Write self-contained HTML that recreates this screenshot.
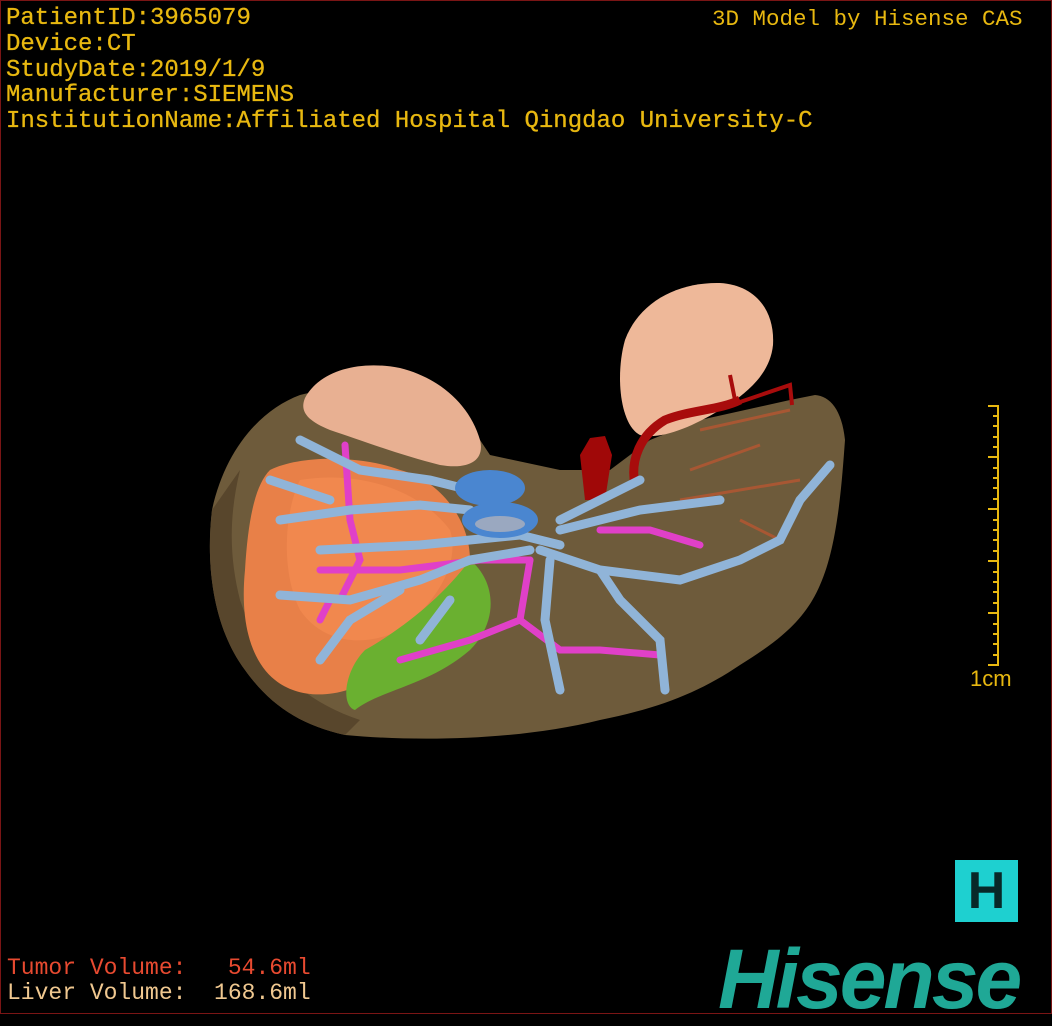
<!DOCTYPE html>
<html><head><meta charset="utf-8"><style>
html,body{margin:0;padding:0;background:#000;}
body{width:1052px;height:1020px;position:relative;overflow:hidden;}
.frame{position:absolute;left:0;top:0;width:1050px;height:1012px;border:1px solid #7a1515;}
.t{position:absolute;font-family:"Liberation Mono",monospace;white-space:pre;line-height:1;}
.y{color:#e8b810;font-size:24px;left:6px;-webkit-text-stroke:0.3px #e8b810;}
</style></head><body>
<div class="frame"></div>
<svg width="1052" height="1020" style="position:absolute;left:0;top:0">
<path d="M300,395 C260,410 225,450 212,510 C205,570 215,630 245,670 C270,705 300,725 345,735 C420,742 520,740 600,720 C660,708 700,692 740,665 C780,640 805,620 820,585 C838,545 842,480 845,440 C842,410 830,396 815,395 L790,400 L700,420 L650,440 L610,470 L560,470 L490,455 L480,440 C440,400 360,380 300,395 Z" fill="#6e5b3b"/>
<path d="M212,510 C205,570 215,630 245,670 C270,705 300,725 345,735 L360,720 C300,700 260,660 240,600 C230,560 228,520 240,470 Z" fill="#58462c"/>
<path d="M270,470 C300,455 360,455 400,470 C440,480 470,520 470,560 C470,610 430,650 380,675 C340,700 300,700 275,680 C250,660 240,620 245,570 C248,520 255,485 270,470 Z" fill="#e88048"/>
<path d="M300,480 C360,470 420,490 450,530 C460,560 440,600 400,630 C360,650 320,640 300,610 C280,570 285,510 300,480 Z" fill="#f28a50" opacity="0.8"/>
<path d="M470,560 C495,580 500,620 470,650 C430,685 380,690 355,710 C340,705 345,670 365,650 C400,630 440,600 470,560 Z" fill="#6ab030"/>
<path d="M305,398 C320,370 360,360 400,368 C440,378 470,405 480,440 C485,460 470,470 440,465 C400,455 360,440 330,430 C305,420 300,410 305,398 Z" fill="#e8b092"/>
<path d="M625,340 C640,300 680,282 720,283 C755,285 775,310 773,345 C770,375 745,395 720,410 C690,428 660,440 640,435 C620,425 615,375 625,340 Z" fill="#eeb899"/>
<path d="M635,485 C630,460 640,435 665,420 C690,410 720,410 740,400" stroke="#a80c0c" stroke-width="9" fill="none"/>
<path d="M735,400 L730,375 M740,402 L790,385 L792,405" stroke="#a80c0c" stroke-width="4" fill="none"/>
<path d="M580,455 L590,438 L605,436 L612,455 L605,500 L585,500 Z" fill="#a00808"/>
<path d="M700,430 L790,410 M690,470 L760,445 M680,500 L800,480 M740,520 L780,540" stroke="#c05530" stroke-width="3" fill="none" opacity="0.7"/>
<g stroke="#e040c8" stroke-width="7" fill="none" stroke-linecap="round">
<path d="M345,445 L350,520 L360,560 L340,600"/>
<path d="M320,570 L400,570 L480,560 L530,560"/>
<path d="M530,560 L520,620 L470,640 L400,660"/>
<path d="M520,620 L560,650 L600,650 L660,655"/>
<path d="M600,530 L650,530 L700,545"/>
<path d="M330,600 L320,620"/>
</g>
<g stroke="#90b4d8" stroke-width="9" fill="none" stroke-linecap="round">
<path d="M300,440 L360,470 L430,480 L470,490"/>
<path d="M280,520 L350,510 L420,505 L470,510"/>
<path d="M270,480 L330,500"/>
<path d="M320,550 L420,545 L520,535 L560,545"/>
<path d="M280,595 L350,600 L420,580 L470,560 L530,550"/>
<path d="M320,660 L350,620 L400,590"/>
<path d="M420,640 L450,600"/>
<path d="M540,550 L600,570 L680,580 L740,560 L780,540 L800,500"/>
<path d="M800,500 L830,465"/>
<path d="M600,570 L620,600 L660,640 L665,690"/>
<path d="M550,560 L545,620 L560,690"/>
<path d="M560,530 L640,510 L720,500"/>
<path d="M560,520 L620,490 L640,480"/>
</g>
<ellipse cx="490" cy="488" rx="35" ry="18" fill="#4a86d0"/>
<ellipse cx="500" cy="520" rx="38" ry="18" fill="#4a86d0"/>
<ellipse cx="500" cy="524" rx="25" ry="8" fill="#9aa8c0"/>
<path d="M998,405 V666" stroke="#e8b810" stroke-width="2"/>
<g stroke="#e8b810" stroke-width="2">
<path d="M988,406 H998 M988,457 H998 M988,509 H998 M988,561 H998 M988,613 H998 M988,665 H998"/>
<path d="M993,416 H998 M993,426 H998 M993,437 H998 M993,447 H998 M993,468 H998 M993,478 H998 M993,488 H998 M993,499 H998 M993,520 H998 M993,530 H998 M993,540 H998 M993,551 H998 M993,572 H998 M993,582 H998 M993,592 H998 M993,603 H998 M993,624 H998 M993,634 H998 M993,644 H998 M993,655 H998"/>
</g>
</svg>
<div class="t y" style="top:7px">PatientID:3965079</div>
<div class="t y" style="top:33px">Device:CT</div>
<div class="t y" style="top:59px">StudyDate:2019/1/9</div>
<div class="t y" style="top:84px">Manufacturer:SIEMENS</div>
<div class="t y" style="top:110px">InstitutionName:Affiliated Hospital Qingdao University-C</div>
<div class="t" style="color:#e8b810;font-size:22.5px;left:712px;top:8px">3D Model by Hisense CAS</div>
<div class="t" style="color:#e8b810;font-size:22px;left:970px;top:668px;font-family:'Liberation Sans',sans-serif">1cm</div>
<div class="t" style="color:#e84a30;font-size:23px;left:7px;top:957px">Tumor Volume:   54.6ml</div>
<div class="t" style="color:#f0c890;font-size:23px;left:7px;top:982px">Liver Volume:  168.6ml</div>
<div style="position:absolute;left:955px;top:860px;width:63px;height:62px;background:#1ed0d0;color:#082828;font:52px 'Liberation Sans',sans-serif;font-weight:bold;text-align:center;line-height:62px">H</div>
<div class="t" style="left:718px;top:937px;color:#1fa896;font:italic bold 84px 'Liberation Sans',sans-serif;letter-spacing:-3px;line-height:1">Hisense</div>
</body></html>
